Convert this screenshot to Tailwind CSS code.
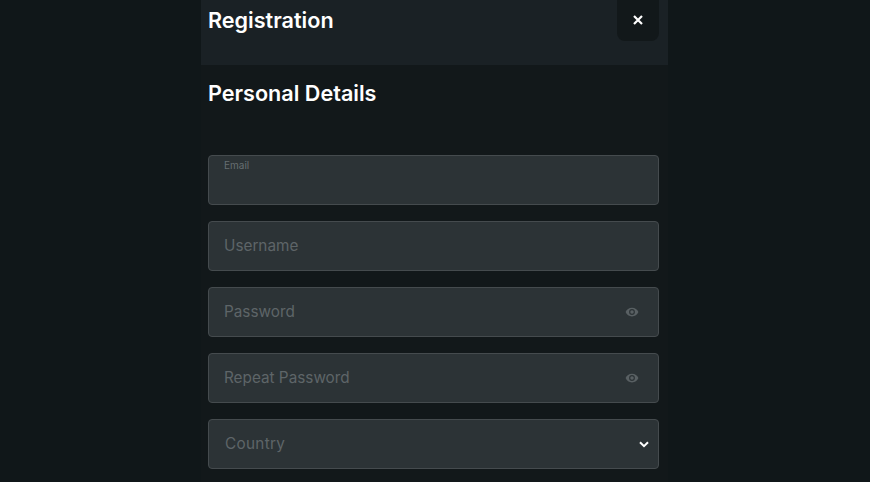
<!doctype html>
<html lang="en">
<head>
    <meta charset="utf-8">
    <title>Registration</title>
    <script src="https://cdn.jsdelivr.net/npm/@tailwindcss/browser@4"></script>
</head>
<body class="bg-[#101719] font-['Inter',sans-serif] h-[482px] overflow-hidden">
    <div class="w-[467px] ml-[201px] h-[482px] bg-[#12181a]">
        <header class="h-[65px] bg-[#1a2125] flex justify-between items-start pl-[7px] pr-[9px]">
            <h2 class="text-[21.6px] leading-[40px] font-semibold text-white">Registration</h2>
            <button class="w-[42px] h-[41px] pb-[2px] rounded-b-lg bg-[#12181a] flex items-center justify-center">
                <svg width="10" height="10" viewBox="0 0 10 10" class="block"><path d="M1 1l8 8M9 1L1 9" stroke="#fff" stroke-width="2.2" fill="none"/></svg>
            </button>
        </header>

        <div class="pl-[7px] pr-[9px]">
            <h3 class="text-[21.6px] leading-[28px] font-semibold text-white mt-[14px] mb-[48px]">Personal Details</h3>

            <div class="flex flex-col gap-4">
                <div class="relative h-[50px] rounded bg-[#2c3336] border border-[#454b4e]">
                    <span class="absolute left-[15px] top-[3px] text-[10px] leading-[12px] text-[#666e71]">Email</span>
                </div>
                <div class="h-[50px] rounded bg-[#2c3336] border border-[#454b4e] flex items-center px-[15px] text-[15.3px] text-[#5e6568]">Username</div>
                <div class="h-[50px] rounded bg-[#2c3336] border border-[#454b4e] flex items-center justify-between pl-[15px] pr-[19px] text-[15.3px] text-[#5e6568]">
                    Password
                    <svg width="14" height="14" viewBox="0 0 24 24" fill="#596063"><path d="M12 4.500C7 4.500 2.700 7.600 1 12c1.700 4.400 6 7.500 11 7.500s9.300-3.100 11-7.500c-1.700-4.400-6-7.500-11-7.500zM12 17a5 5 0 1 1 0-10 5 5 0 0 1 0 10zm0-8a3 3 0 1 0 0 6 3 3 0 0 0 0-6z"/></svg>
                </div>
                <div class="h-[50px] rounded bg-[#2c3336] border border-[#454b4e] flex items-center justify-between pl-[15px] pr-[19px] text-[15.3px] text-[#5e6568]">
                    Repeat Password
                    <svg width="14" height="14" viewBox="0 0 24 24" fill="#596063"><path d="M12 4.500C7 4.500 2.700 7.600 1 12c1.700 4.400 6 7.500 11 7.500s9.300-3.100 11-7.500c-1.700-4.400-6-7.500-11-7.500zM12 17a5 5 0 1 1 0-10 5 5 0 0 1 0 10zm0-8a3 3 0 1 0 0 6 3 3 0 0 0 0-6z"/></svg>
                </div>
                <div class="h-[50px] rounded bg-[#2c3336] border border-[#454b4e] flex items-center justify-between pl-[16px] pr-[9px] text-[15.3px] tracking-[0.3px] text-[#5e6568]">
                    Country
                    <svg width="10" height="7" viewBox="0 0 10 7"><path d="M1 1.200l4 4 4-4" stroke="#fff" stroke-width="2" fill="none"/></svg>
                </div>
            </div>
        </div>
    </div>
</body>
</html>
